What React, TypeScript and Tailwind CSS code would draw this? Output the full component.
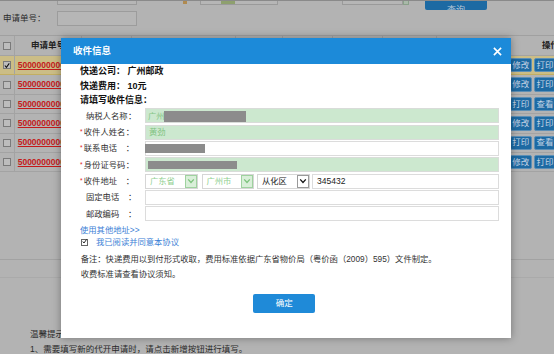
import React from "react";

const FONT = { fontFamily: '"Liberation Sans", "Noto Sans CJK SC", sans-serif' };

function Chevron({ color }: { color: string }) {
  return (
    <svg width="8" height="8" viewBox="0 0 10 10">
      <polyline points="1.5,3 5,6.8 8.5,3" fill="none" stroke={color} strokeWidth="1.6" />
    </svg>
  );
}

function Label({ name, req }: { name: string; req?: boolean }) {
  return (
    <div className={`w-[65px] shrink-0 flex items-center text-[8.3px] text-[#333] ${req ? "pl-0" : "pl-[6px]"}`}>
      {req && <span className="w-[3.8px] shrink-0 text-[6.5px] text-[#e02020] leading-none">*</span>}
      <span className="w-[42px] shrink-0 whitespace-nowrap">{name}</span>
      <span>：</span>
    </div>
  );
}

function Select({ text, active, w, mr }: { text: string; active?: boolean; w: string; mr: string }) {
  return (
    <div className={`${w} ${mr} h-full shrink-0 flex border border-[#d6d6d6] bg-white`}>
      <div className={`flex-1 flex items-center pl-[4px] text-[8.3px] ${active ? "text-[#222]" : "text-[#8fcf8f]"}`}>{text}</div>
      <div
        className={`w-[12px] h-full flex items-center justify-center border ${
          active ? "border-[#9a9a9a] bg-white" : "border-[#9fd29f] bg-[#d9efd9]"
        }`}
      >
        <Chevron color={active ? "#111" : "#7cc27c"} />
      </div>
    </div>
  );
}

const rows = [
  ["修改", "打印"],
  ["修改", "打印"],
  ["打印", "查看"],
  ["修改", "打印"],
  ["打印", "查看"],
  ["修改", "打印"],
];

export default function App() {
  return (
    <div className="relative w-[554px] h-[354px] overflow-hidden bg-[#b3b3b3]" style={FONT}>
      {/* background page */}
      <div className="flex flex-col">
        <div className="h-[9px] flex items-start border-t border-[#8a8a8a]">
          <div className="ml-[57px] w-[80px] h-[4px] border-x border-b border-[#9a9a9a] bg-[#b6b6b6]" />
          <div className="ml-[46px] mt-0 w-[4px] h-[3px] bg-[#b08a50]" />
          <div className="ml-[13px] w-[78px] h-[4px] border-x border-b border-[#9a9a9a] bg-[#b6b6b6] flex">
            <div className="ml-[20px] w-[14px] h-[3px] bg-[#8ea06e]" />
          </div>
          <div className="ml-[64px] w-[61px] h-[4px] border-x border-b border-[#9a9a9a] bg-[#b6b6b6]" />
          <div className="w-[6px] h-[4px] border border-t-0 border-[#8aa08a] bg-[#a9b9a9]" />
          <div className="ml-[16px] w-[62px] h-[9px] bg-[#1d6aa3] rounded-b-[2px] overflow-hidden flex justify-center items-start">
            <span className="text-[9px] leading-[9px] text-[#b9c9d9] mt-[5px]">查询</span>
          </div>
        </div>
        <div className="mt-[2px] h-[14.5px] flex items-center">
          <span className="ml-[3px] w-[54px] text-[8.5px] text-[#2a2a2a]">申请单号：</span>
          <div className="w-[80px] h-[14.5px] border border-[#9c9c9c] bg-[#b6b6b6]" />
        </div>
        <div className="mt-[9.5px] flex flex-col border-t border-[#a0a0a0]">
          <div className="h-[20px] flex border-b border-[#a3a3a3] text-[8.5px] font-bold text-[#222]">
            <div className="w-[15px] border-r border-[#a3a3a3] flex items-center justify-center">
              <div className="w-[8px] h-[8px] border border-[#7a7a7a] bg-[#bdbdbd]" />
            </div>
            <div className="w-[67px] border-r border-[#a3a3a3] flex items-center pl-[16px] whitespace-nowrap">申请单号</div>
            <div className="w-[50px] border-r border-[#a3a3a3]" />
            <div className="w-[104px] border-r border-[#a3a3a3]" />
            <div className="w-[47px] border-r border-[#a3a3a3]" />
            <div className="w-[50px] border-r border-[#a3a3a3]" />
            <div className="w-[50px] border-r border-[#a3a3a3]" />
            <div className="w-[54px] border-r border-[#a3a3a3]" />
            <div className="flex-1 flex items-center pl-[105px] whitespace-nowrap overflow-hidden">操作</div>
          </div>
          {rows.map((r, i) => (
            <div
              key={i}
              className={`h-[19.4px] flex border-b ${i === 0 ? "bg-[#cbbd86] border-[#c2ae62]" : "border-[#a3a3a3]"}`}
            >
              <div className="w-[15px] shrink-0 border-r border-[#a3a3a3] flex items-center justify-center">
                <div className="w-[8px] h-[8px] border border-[#7a7a7a] bg-[#bdbdbd] flex items-center justify-center">
                  {i === 0 && (
                    <svg width="7" height="7" viewBox="0 0 10 10">
                      <polyline points="1.5,5 4,8 8.8,1.5" fill="none" stroke="#111" strokeWidth="1.8" />
                    </svg>
                  )}
                </div>
              </div>
              <div className="w-[480px] shrink-0 flex items-center pl-[2.7px] text-[8.5px] font-bold text-[#c41a1a] underline whitespace-nowrap overflow-hidden">
                5000000000000000
              </div>
              <div className="flex-1 flex items-center pl-[14.7px] gap-[2.3px] overflow-hidden">
                {r.map((b, j) => (
                  <div
                    key={j}
                    className="w-[22px] h-[14.5px] shrink-0 rounded-[2px] bg-[#1d6aa3] border border-[#5d8fb6] flex items-center justify-center text-[8.5px] text-[#c3d3e3] whitespace-nowrap"
                  >
                    {b}
                  </div>
                ))}
              </div>
            </div>
          ))}
        </div>
        <div className="mt-[87px] h-[19px] border-t border-b border-[#a2a2a2] border-b-[#aaaaaa]" />
        <div className="mt-[49px] pl-[30px] text-[8.5px] leading-[15px] text-[#2a2a2a] whitespace-nowrap">
          <div>温馨提示：</div>
          <div>1、需要填写新的代开申请时，请点击新增按钮进行填写。</div>
        </div>
      </div>

      {/* modal */}
      <div className="absolute left-[61px] top-[38px] w-[450px] h-[300px] bg-white shadow-[0_0_8px_rgba(0,0,0,0.35)] flex flex-col">
        <div className="h-[26px] shrink-0 bg-[#1c8ad9] flex items-center justify-between pl-[12px] pr-[9.5px]">
          <span className="text-[9.5px] text-white font-semibold">收件信息</span>
          <svg width="9" height="9" viewBox="0 0 10 10">
            <path d="M1 1 L9 9 M9 1 L1 9" stroke="#fff" strokeWidth="1.8" />
          </svg>
        </div>
        <div className="flex flex-col pl-[19px] pr-[12px]">
          <div className="h-[15px] flex items-center text-[9px] font-bold text-[#111] whitespace-nowrap">快递公司：&nbsp;广州邮政</div>
          <div className="h-[15px] flex items-center text-[9px] font-bold text-[#111] whitespace-nowrap">快递费用：&nbsp;10元</div>
          <div className="h-[13px] flex items-center text-[9px] font-bold text-[#111] whitespace-nowrap">请填写收件信息：</div>
          <div className="mt-[1.3px] flex flex-col gap-[1.33px]">
            <div className="h-[15px] flex">
              <Label name="纳税人名称" />
              <div className="relative flex-1 border border-[#d9dcd9] bg-[#cce8cf] flex items-center pl-[2px] text-[8.3px] text-[#86c686]">
                广州
                <div className="absolute left-[18px] top-[2px] w-[82px] h-[11px] bg-[#8c8c8c]" />
              </div>
            </div>
            <div className="h-[15px] flex">
              <Label name="收件人姓名" req />
              <div className="flex-1 border border-[#d9dcd9] bg-[#cce8cf] flex items-center pl-[3px] text-[8.3px] text-[#7fc27f]">
                黄劲
              </div>
            </div>
            <div className="h-[15px] flex">
              <Label name="联系电话" req />
              <div className="relative flex-1 border border-[#dcdcdc] bg-white">
                <div className="absolute -left-[1px] top-[2px] w-[60px] h-[8.7px] bg-[#8c8c8c]" />
              </div>
            </div>
            <div className="h-[15px] flex">
              <Label name="身份证号码" req />
              <div className="relative flex-1 border border-[#d9dcd9] bg-[#cce8cf]">
                <div className="absolute left-[2px] top-[2.5px] w-[89px] h-[8.5px] bg-[#8c8c8c]" />
              </div>
            </div>
            <div className="h-[15px] flex">
              <Label name="收件地址" req />
              <div className="flex-1 flex h-full">
                <Select text="广东省" w="w-[53px]" mr="mr-[3.5px]" />
                <Select text="广州市" w="w-[52.5px]" mr="mr-[3px]" />
                <Select text="从化区" active w="w-[53px]" mr="mr-[2px]" />
                <div className="flex-1 border border-[#dcdcdc] bg-white flex items-center pl-[4px] text-[8.5px] text-[#222]">
                  345432
                </div>
              </div>
            </div>
            <div className="h-[15px] flex">
              <Label name="固定电话" />
              <div className="flex-1 border border-[#dcdcdc] bg-white" />
            </div>
            <div className="h-[15px] flex">
              <Label name="邮政编码" />
              <div className="flex-1 border border-[#dcdcdc] bg-white" />
            </div>
          </div>
          <div className="mt-[1.7px] h-[14px] flex items-center text-[8.3px] text-[#3c7fd6] whitespace-nowrap">使用其他地址&gt;&gt;</div>
          <div className="h-[11px] flex items-center">
            <div className="ml-[0.7px] w-[7px] h-[7px] border border-[#666] bg-white flex items-center justify-center">
              <svg width="7" height="7" viewBox="0 0 10 10" className="-mt-[1px]">
                <polyline points="1.5,5 4,8 9,1" fill="none" stroke="#111" strokeWidth="1.8" />
              </svg>
            </div>
            <span className="ml-[8.3px] text-[8.3px] text-[#3c7fd6] whitespace-nowrap">我已阅读并同意本协议</span>
          </div>
          <div className="mt-[3.8px] h-[15px] flex items-center pl-[0.7px] text-[8.3px] text-[#333] whitespace-nowrap">
            备注：快递费用以到付形式收取，费用标准依据广东省物价局（粤价函（2009）595）文件制定。
          </div>
          <div className="h-[15px] flex items-center pl-[0.7px] text-[8.3px] text-[#333] whitespace-nowrap">
            收费标准请查看协议须知。
          </div>
        </div>
        <div className="mt-[12.5px] flex justify-center pr-[3.4px]">
          <div className="w-[62px] h-[18.4px] rounded-[2px] bg-[#1f8ad8] flex items-center justify-center text-[8.5px] text-white">
            确定
          </div>
        </div>
      </div>
    </div>
  );
}
